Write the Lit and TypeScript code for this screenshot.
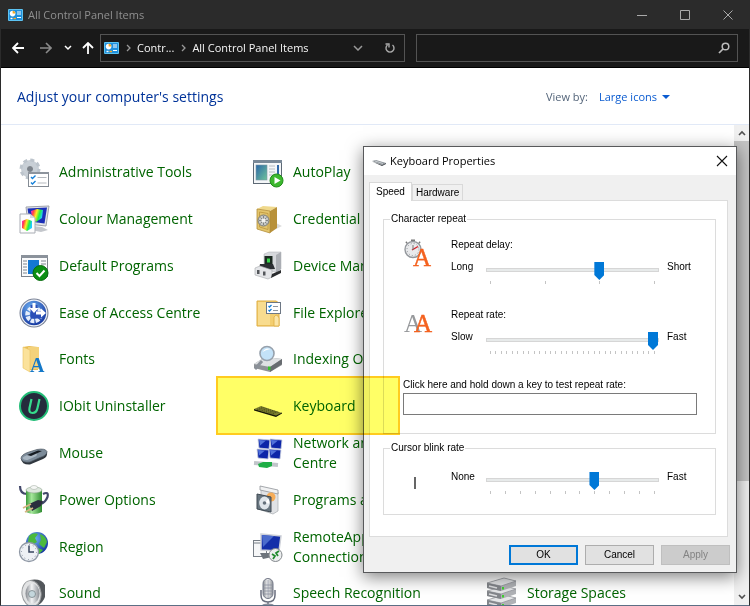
import { LitElement, html, svg, css, SVGTemplateResult } from "lit";
import { customElement } from "lit/decorators.js";

interface Item {
  name: string;
  icon: SVGTemplateResult;
}

const controlPanelIcon = html`<svg class="cp" viewBox="0 0 15 12" aria-hidden="true">
  <rect width="15" height="12" rx="1" fill="#5cc3f2" />
  <rect x="1" y="1" width="13" height="10" fill="#1f8fdc" />
  <circle cx="4.6" cy="4.6" r="2.8" fill="#fff" />
  <path d="M4.6 4.6V1.8A2.8 2.8 0 0 1 7.4 4.6z" fill="#f7a823" />
  <path d="M9 3h4M9 5h4M9 8.5h4" stroke="#fff" stroke-width="1.2" />
  <path d="M2.5 9.5h2" stroke="#fff" stroke-width="1.4" />
  <path d="M5.5 9.5h2.5" stroke="#f7a823" stroke-width="1.4" />
</svg>`;

const monitor = (x: number, y: number) => svg`
  <path d="M${x} ${y}l12 1-1 9-10-1z" fill="#0c25a8" stroke="#c9cfe0" stroke-width=".8"/>
  <path d="M${x + 1} ${y + 1}l7 .5-6 5z" fill="#6d92ee" opacity=".7"/>`;

const administrative = svg`
  <circle cx="12" cy="13" r="6" fill="none" stroke="#c8cfd6" stroke-width="6"/>
  <circle cx="12" cy="13" r="9" fill="none" stroke="#bcc4cc" stroke-width="3" stroke-dasharray="4 3.070"/>
  <circle cx="12" cy="13" r="3" fill="#7c838b"/>
  <rect x="10.500" y="16.500" width="20" height="14" fill="#fff" stroke="#848b94"/>
  <rect x="10" y="16" width="21" height="2" fill="#8d949d"/>
  <path d="M13 21l1.500 1.500 3-3M13 26.500l1.500 1.500 3-3" fill="none" stroke="#1580d8" stroke-width="1.400"/>
  <path d="M19.500 21.500h9M19.500 27h9" stroke="#b5b9be"/>`;

const colour = svg`
  <path d="M8 4l23-1-3 20-18-2z" fill="#e2e4e8" stroke="#9fa3ac"/>
  <path d="M9.500 5.500l19.500-1-2.500 16-15-2z" fill="#1a2fb8"/>
  <path d="M14 23l10 1 6 3-7 2-10-2z" fill="#c4c7cc"/>
  <path d="M13 8l6-2 6 1-1 8-6 4-4-4z" fill="url(#rainbow)"/>
  <path d="M2 11h10l5 4v15H2z" fill="#fdfdfd" stroke="#a9adb4"/>
  <path d="M12 11l5 4h-5z" fill="#d5d8dd"/>
  <path d="M4 18l5-2 5 2v7l-5 3-5-3z" fill="url(#rainbow)"/>`;

const defaults = svg`
  <rect x="3.500" y="5.500" width="26" height="21" fill="#fafbfc" stroke="#7b828b"/>
  <rect x="3" y="5" width="27" height="3" fill="#8b929b"/>
  <rect x="10" y="10" width="11" height="14" fill="#1478d4"/>
  <path d="M5 11h4M5 14h4M5 17h4M5 20h4M5 23h4M23 11h5M23 14h5" stroke="#7d858e"/>
  <circle cx="22.500" cy="23" r="7.500" fill="#0c8f14" stroke="#066b0c"/>
  <path d="M18.500 23l3 3 5-5.500" fill="none" stroke="#fff" stroke-width="2"/>`;

const ease = svg`
  <circle cx="16" cy="16" r="14.500" fill="#7b8498"/>
  <circle cx="16" cy="16" r="12.800" fill="url(#blueball)" stroke="#eef1f7" stroke-width="1.200"/>
  <circle cx="16" cy="17.500" r="6.500" fill="none" stroke="#e6edfb" stroke-width="4.500" stroke-dasharray="3.600 1.200"/>
  <path d="M16 8v10h9" fill="none" stroke="#2a4fb8" stroke-width="7"/>
  <path d="M14.500 6h3v5h3l-4.500 5-4.500-5h3zM18 14.500h5v-3l5 4.500-5 4.500v-3h-5z" fill="#fff"/>`;

const fonts = svg`
  <path d="M5 4l6-1 9 1v23H8z" fill="#e9bd51"/>
  <path d="M10 4h11v22H10z" fill="#f4d27b"/>
  <path d="M5 4l7 3v22l-7-4z" fill="#fbe29b" stroke="#e9c463" stroke-width=".6"/>
  <text x="12" y="29" font-family="Liberation Serif, serif" font-weight="700" font-size="20" fill="#1478c8">A</text>`;

const iobit = svg`
  <circle cx="16" cy="16" r="14" fill="#252b3c" stroke="#22bd77" stroke-width="2"/>
  <path d="M13.500 9l-2 9q-1 5 3 5t5-5l2-9" fill="none" stroke="#35dc8c" stroke-width="2.200"/>`;

const mouse = svg`
  <path d="M3 22q1 6 9 5.500l13-5.500q5-2 4-7z" fill="#2f363e"/>
  <path d="M3 21.500q0-4 8-6.500l8-2.500q8-1.500 10 2 0 4-7 6l-10 4.500q-8 1-9-3.500z" fill="#7c8b99" stroke="#4d5862" stroke-width=".7"/>
  <path d="M4.500 21q2-2.500 7-3.500l6-2q3 2 0 4l-8 3.500q-4 .500-5-2z" fill="#a8b5c1"/>
  <path d="M9 18l11-4.500 4 .500-11 5z" fill="#161b21"/>`;

const power = svg`
  <path d="M2 2q0 8 7 8M25 10q6-3 4.500 3-2 5-6.500 7" fill="none" stroke="#42486a" stroke-width="2.200"/>
  <path d="M8 6h16v22q-8 4-16 0z" fill="url(#battery)"/>
  <ellipse cx="16" cy="6" rx="8" ry="3" fill="#dfe8df" stroke="#8da48d" stroke-width=".6"/>
  <ellipse cx="16" cy="3.500" rx="3.500" ry="2" fill="#f5f7f5" stroke="#a9b3a9" stroke-width=".6"/>
  <path d="M11 20l9-4 5 1-2 5-9 5z" fill="#2a2d3d"/>
  <path d="M5 24l8-4M7 28l8-4" stroke="#d6b483" stroke-width="1.800"/>`;

const region = svg`
  <circle cx="19" cy="12" r="11" fill="url(#blueball)"/>
  <path d="M11 5q4-4 9-2l-3 4 2 4-5 3-4-3zM22 3q6 2 7 8l-3 6-5-4 2-4zM20 17l5 2-4 4z" fill="#4bb93d"/>
  <circle cx="11" cy="21" r="9.500" fill="#eef1f5" stroke="#8f98a5" stroke-width="1.300"/>
  <circle cx="11" cy="21" r="7.500" fill="none" stroke="#8891a0" stroke-dasharray="1 2.900"/>
  <path d="M11 14.500V21h5" fill="none" stroke="#38465f" stroke-width="1.500"/>`;

const sound = svg`
  <path d="M12 3q11-2 15 5v12q-3 8-12 10z" fill="#53575b"/>
  <ellipse cx="13.500" cy="16.500" rx="9.500" ry="13" transform="rotate(-8 13.500 16.500)" fill="#e2e3e4" stroke="#9a9d9f"/>
  <ellipse cx="14.500" cy="16.500" rx="7" ry="10" fill="url(#metal)"/>
  <circle cx="14" cy="17" r="3.500" fill="#c4d6dc" stroke="#788488" stroke-width=".8"/>`;

const autoplay = svg`
  <rect x="1.500" y="4.500" width="28" height="23" fill="#f4f6f8" stroke="#5d6975"/>
  <rect x="1" y="4" width="29" height="3" fill="#7a8998"/>
  <rect x="4" y="9" width="11" height="15" fill="url(#screen)" stroke="#7c98a6" stroke-width=".6"/>
  <path d="M17 10h6M17 13h6M17 16h6M17 19h4" stroke="#b6bcc3"/>
  <path d="M26 9v9" stroke="#2f67a8" stroke-width="2"/>
  <circle cx="24.500" cy="24.500" r="6.500" fill="#3db82f" stroke="#1f8c18"/>
  <path d="M22.500 21l6 3.500-6 3.500z" fill="#fff"/>`;

const credential = svg`
  <path d="M20 28l10-5-6-3z" fill="#dcdcdc"/>
  <path d="M5 6l6-3 14 1-7 4z" fill="#f0d98c"/>
  <path d="M18 8l7-4v21l-7 5z" fill="#b8913a"/>
  <path d="M5 6l13 2v22L5 26z" fill="#e3c56c" stroke="#b38d38" stroke-width=".8"/>
  <path d="M7.500 9l8.500 1.500v16L7.500 24z" fill="none" stroke="#c39d45"/>
  <circle cx="11.500" cy="17.500" r="5.500" fill="#c6c8c6" stroke="#777976" stroke-width="1"/>
  <path d="M11.500 13v9M7 17.500h9M8.500 14.500l6 6M14.500 14.500l-6 6" stroke="#7b7d7a" stroke-width=".9"/>
  <circle cx="11.500" cy="17.500" r="2" fill="#f2f2ef"/>`;

const device = svg`
  <path d="M12 4l5-2h12v17l-5 3-12-2z" fill="#d6d8dc" stroke="#a9acb1" stroke-width=".5"/>
  <path d="M24 5l5-3v17l-5 4z" fill="#abaeb4"/>
  <rect x="12.500" y="6" width="8" height="9" fill="#1d2a22"/>
  <rect x="15" y="8.500" width="3" height="4" fill="#38d64c"/>
  <path d="M8 14h13l2 5-16 1z" fill="#2c2f33"/>
  <path d="M3 18l5-2 12 4v7l-4 2-13-4z" fill="#e4e5e8" stroke="#a4a7ab" stroke-width=".6"/>
  <path d="M20 24l9-4v3l-10 5z" fill="#2a2c2e"/>
  <rect x="5" y="20" width="2.500" height="4" fill="#54575b"/><rect x="11" y="21.500" width="2.500" height="4" fill="#54575b"/>`;

const explorer = svg`
  <path d="M5 4h19l3 2v23H5z" fill="#f3ce70" stroke="#dfae42"/>
  <path d="M6 5h12v23H6z" fill="#f8dc8f"/>
  <path d="M22 20q3-4 5 1v8h-5z" fill="#fbe5a6" stroke="#dfae42" stroke-width=".8"/>
  <rect x="14.500" y="5.500" width="14" height="11" fill="#fff" stroke="#6d7784"/>
  <path d="M16.500 9l1 1 2-2M16.500 13l1 1 2-2" fill="none" stroke="#1580d8" stroke-width="1.300"/>
  <path d="M21 9.500h5M21 13.500h5" stroke="#8f969e"/>`;

const indexing = svg`
  <path d="M2 21l11-7 17 2v6L18 29 2 25z" fill="#8e9296"/>
  <path d="M2 21l11-7 17 2-12 8z" fill="#dfe1e3"/>
  <path d="M18 24l12-8v5l-12 8z" fill="#686c70"/>
  <rect x="16" y="23.500" width="2.500" height="3.500" fill="#35c22c"/>
  <path d="M10 18l-7 8" stroke="#8a9098" stroke-width="3"/>
  <circle cx="15" cy="10.500" r="7" fill="#c3e2f8" stroke="#97a1ac" stroke-width="1.600"/>
  <path d="M10.500 9q3-5 8-3-5 1-8 3z" fill="#fff"/>`;

const keyboard = svg`
  <path d="M2 19l7-3 21 7-6 3z" fill="#7f8272"/>
  <path d="M2 19l22 6.500 6-3v1l-6 3.500L2 20.500z" fill="#15160f"/>
  <path d="M5 19l18 5M7 18l18 5M9 17l18 5.500" stroke="#44463b" stroke-width=".8" stroke-dasharray="1.500 .8"/>`;

const network = svg`
  ${monitor(6, 2)}${monitor(18, 2)}${monitor(5, 12)}${monitor(17, 12)}
  <path d="M2 26l24 2" stroke="#c1c5ca" stroke-width="4"/>
  <path d="M6 27l5-2 9 0 0-2 0 6-5 2-8-1z" fill="#1fae46"/>`;

const programs = svg`
  <path d="M9 4l17 4v19l-5 3-12-4z" fill="#e0e2e5" stroke="#a8acb0" stroke-width=".7"/>
  <path d="M8 2l18 4v4L8 6z" fill="#f1f2f3" stroke="#8f9398" stroke-width=".8"/>
  <circle cx="19" cy="13" r="4.500" fill="#f6ad59"/>
  <path d="M5 10l14 3v15L5 25z" fill="#687680" stroke="#3f4952"/>
  <ellipse cx="12.500" cy="19" rx="5.300" ry="6.500" fill="#dfe5ea"/>
  <path d="M12.500 19l4-4.500 1 5z" fill="#fff"/>
  <circle cx="12.500" cy="19" r="1.800" fill="#65717c"/>`;

const remote = svg`
  <rect x="1.500" y="9.500" width="13" height="16" fill="#f6f7f8" stroke="#777e86"/>
  <path d="M2 12h12" stroke="#777e86"/>
  <path d="M9 3l20 2-2 15-18-1z" fill="#142fa9" stroke="#cfd2d9" stroke-width="1.500"/>
  <path d="M10 4l12 1-11 11z" fill="#6384dc" opacity=".7"/>
  <path d="M8 22l10 0 2 4-9 2z" fill="#6d747c"/>
  <circle cx="23.500" cy="24" r="6.500" fill="#eceeef" stroke="#83888c"/>
  <path d="M20 23l3 2-2 3M27 20l-3 2 2 3" fill="none" stroke="#208a2d" stroke-width="1.700"/>`;

const speech = svg`
  <path d="M9 13v5q0 7 7 7t7-7v-5M16 25v3" fill="none" stroke="#696e7d" stroke-width="1.500"/>
  <ellipse cx="16" cy="28.500" rx="6" ry="2" fill="#8b8f9b"/>
  <rect x="11" y="1.500" width="10" height="20" rx="5" fill="url(#metal)" stroke="#737887"/>
  <path d="M16 3v18M11 8h10M11 11h10M11 14h10M11 17h10" stroke="#8b90a0" stroke-width=".8"/>`;

const drive = (y: number) => svg`
  <path d="M1 ${y + 3}l17-5 12 3v5l-15 5-14-3z" fill="#b0b2b6"/>
  <path d="M1 ${y + 3}l17-5 12 3-15 5z" fill="#e6e7e9" stroke="#8e9196" stroke-width=".7"/>
  <path d="M1 ${y + 3}l14 3v5l-14-3z" fill="#83868b"/>
  <path d="M3 ${y + 6}l8 2" stroke="#dcdddf" stroke-width="1.500"/>
  <rect x="16" y="${y + 7}" width="2" height="2.500" fill="#3fd02f"/>`;
const storage = svg`${drive(20)}${drive(11)}${drive(3)}`;

const columns: Item[][] = [
  [
    { name: "Administrative Tools", icon: administrative },
    { name: "Colour Management", icon: colour },
    { name: "Default Programs", icon: defaults },
    { name: "Ease of Access Centre", icon: ease },
    { name: "Fonts", icon: fonts },
    { name: "IObit Uninstaller", icon: iobit },
    { name: "Mouse", icon: mouse },
    { name: "Power Options", icon: power },
    { name: "Region", icon: region },
    { name: "Sound", icon: sound },
  ],
  [
    { name: "AutoPlay", icon: autoplay },
    { name: "Credential Manager", icon: credential },
    { name: "Device Manager", icon: device },
    { name: "File Explorer Options", icon: explorer },
    { name: "Indexing Options", icon: indexing },
    { name: "Keyboard", icon: keyboard },
    { name: "Network and Sharing Centre", icon: network },
    { name: "Programs and Features", icon: programs },
    { name: "RemoteApp and Desktop Connections", icon: remote },
    { name: "Speech Recognition", icon: speech },
  ],
  [{ name: "Storage Spaces", icon: storage }],
];

@customElement("keyboard-dialog")
export class KeyboardDialog extends LitElement {
  static styles = css`
    :host {
      display: block;
      box-sizing: border-box;
      border: 1px solid #58595b;
      background: #f0f0f0;
      color: #000;
      font: 10px/14px "Liberation Sans", Arial, sans-serif;
      box-shadow: 0 4px 16px rgba(0, 0, 0, 0.5);
    }
    * { box-sizing: border-box; }
    header {
      display: flex;
      align-items: center;
      height: 28px;
      padding: 0 8px;
      background: #fff;
    }
    svg { flex: none; overflow: visible; }
    h2 {
      flex: 1;
      margin: 0 0 0 4px;
      font: 11px/16px "Open Sans", "Noto Sans", sans-serif;
    }
    button { font: inherit; color: inherit; padding: 0; }
    .close { display: flex; border: 0; background: none; }
    .body { padding: 7px 8px 7px 5px; }
    .tabs { display: flex; align-items: flex-end; height: 18px; }
    .tab {
      height: 16px;
      padding: 0 3px;
      border: 1px solid #d9d9d9;
      border-bottom: 0;
      background: #f0f0f0;
    }
    .tab.active {
      position: relative;
      height: 19px;
      margin-bottom: -1px;
      padding: 0 6px;
      background: #fff;
    }
    .pane {
      border: 1px solid #dcdcdc;
      background: #fff;
      padding: 11px 11px 21px 13px;
    }
    fieldset {
      min-width: 0;
      margin: 0;
      padding: 0 18px 0 19px;
      border: 1px solid #dcdcdc;
    }
    fieldset + fieldset { margin-top: 7px; }
    legend { margin-left: -13px; padding: 0 1px; }
    .repeat { height: 222px; padding-top: 12px; }
    .blink { height: 74px; padding-top: 15px; }
    .setting {
      display: grid;
      grid-template-columns: 48px 35px minmax(0, 1fr) 38px;
      grid-template-rows: 14px auto;
      row-gap: 8px;
      height: 70px;
    }
    .setting svg { grid-row: span 2; }
    .setting .title { grid-column: 2 / -1; }
    .setting.short { grid-template-rows: auto; height: 30px; }
    .setting.short svg { grid-row: auto; }
    .end { padding-left: 8px; }
    .slider { padding-top: 2px; }
    input[type="range"] {
      display: block;
      appearance: none;
      -webkit-appearance: none;
      width: 100%;
      height: 16px;
      margin: 0;
      background: none;
    }
    input[type="range"]::-webkit-slider-runnable-track {
      height: 4px;
      border: 1px solid #d6d6d6;
      background: #e7eaea;
    }
    input[type="range"]::-webkit-slider-thumb {
      -webkit-appearance: none;
      width: 10px;
      height: 18px;
      margin-top: -7px;
      border: 0;
      border-radius: 0;
      background: #0078d7;
      clip-path: polygon(0 0, 100% 0, 100% 72%, 50% 100%, 0 72%);
    }
    .ticks {
      display: flex;
      justify-content: space-between;
      padding: 3px 4px 0;
    }
    .ticks i { width: 1px; height: 3px; background: #c4c4c4; }
    .test { display: block; }
    .test input {
      display: block;
      width: 100%;
      height: 22px;
      margin-top: 1px;
      border: 1px solid #7a7a7a;
      background: #fff;
    }
    footer {
      display: flex;
      justify-content: flex-end;
      gap: 7px;
      margin: 8px -2px 0 0;
    }
    footer button {
      width: 69px;
      height: 20px;
      border: 1px solid #adadad;
      background: #e1e1e1;
    }
    footer .ok { border: 2px solid #0078d7; }
    footer button:disabled {
      border-color: #bfbfbf;
      background: #cccccc;
      color: #838383;
    }
  `;

  private slider(id: string, from: string, to: string, max: number, value: number) {
    return html`
      <label for=${id}>${from}</label>
      <div class="slider">
        <input id=${id} type="range" min="0" max=${max} .value=${String(value)} />
        <div class="ticks">${Array.from({ length: max + 1 }, () => html`<i></i>`)}</div>
      </div>
      <span class="end">${to}</span>
    `;
  }

  render() {
    return html`
      <header>
        <svg width="14" height="14" viewBox="0 0 14 14" aria-hidden="true">
          <path d="M0 7l4-1 10 3-4 2z" fill="#8d949a" />
          <path d="M0 7.500l10 3.500 4-2v1l-4 2z" fill="#3d4247" />
          <path d="M3 7l8 2.500" stroke="#d9dde0" stroke-width=".8" />
        </svg>
        <h2>Keyboard Properties</h2>
        <button class="close" aria-label="Close">
          <svg width="12" height="12" viewBox="0 0 12 12"><path d="M1 1l10 10M11 1L1 11" stroke="#111" stroke-width="1.100" /></svg>
        </button>
      </header>
      <div class="body">
        <div class="tabs" role="tablist">
          <button class="tab active" role="tab" aria-selected="true">Speed</button>
          <button class="tab" role="tab" aria-selected="false">Hardware</button>
        </div>
        <div class="pane">
          <fieldset class="repeat">
            <legend>Character repeat</legend>
            <div class="setting">
              <svg width="30" height="30" viewBox="0 0 30 30" aria-hidden="true">
                <path d="M8 2.500h4M3 5l1-1M16 4l1 1" stroke="#777" stroke-width="1.800" />
                <circle cx="10" cy="11.500" r="8" fill="#e9eaec" stroke="#94989d" stroke-width="1.400" />
                <circle cx="10" cy="11.500" r="6" fill="none" stroke="#8d9196" stroke-dasharray="1 2.140" />
                <path d="M9 12l6-3.500" stroke="#d4202a" stroke-width="1.400" />
                <path d="M10 12V7" stroke="#777" />
                <text x="10" y="28" font-family="Liberation Serif, serif" font-size="25" fill="#f4621f" stroke="#f4621f" stroke-width=".4">A</text>
              </svg>
              <label class="title" for="delay">Repeat delay:</label>
              ${this.slider("delay", "Long", "Short", 3, 2)}
            </div>
            <div class="setting">
              <svg width="30" height="30" viewBox="0 0 30 30" aria-hidden="true">
                <g font-family="Liberation Serif, serif" font-size="25">
                  <text x="1" y="24" fill="#97999c">A</text>
                  <text x="11" y="24" fill="#f4621f" stroke="#f4621f" stroke-width=".5">A</text>
                </g>
              </svg>
              <label class="title" for="rate">Repeat rate:</label>
              ${this.slider("rate", "Slow", "Fast", 30, 30)}
            </div>
            <label class="test">
              Click here and hold down a key to test repeat rate:
              <input type="text" />
            </label>
          </fieldset>
          <fieldset class="blink">
            <legend>Cursor blink rate</legend>
            <div class="setting short">
              <svg width="30" height="22" viewBox="0 0 30 22" aria-hidden="true"><path d="M12 7v12" stroke="#333" stroke-width="1.500" /></svg>
              ${this.slider("blink", "None", "Fast", 11, 7)}
            </div>
          </fieldset>
        </div>
        <footer>
          <button class="ok">OK</button>
          <button>Cancel</button>
          <button disabled>Apply</button>
        </footer>
      </div>
    `;
  }
}

@customElement("app-root")
export class AppRoot extends LitElement {
  static styles = css`
    :host {
      display: flex;
      flex-direction: column;
      position: relative;
      box-sizing: border-box;
      height: 100vh;
      overflow: hidden;
      border: 1px solid #2b2b2b;
      border-bottom-color: #5c6f85;
      background: #fff;
      font: 11px/16px "Open Sans", "Noto Sans", sans-serif;
    }
    * { box-sizing: border-box; }
    button {
      display: flex;
      align-items: center;
      justify-content: center;
      padding: 0;
      border: 0;
      background: none;
      color: inherit;
      font: inherit;
    }
    svg { flex: none; fill: none; }
    .cp { width: 15px; height: 12px; }
    .titlebar {
      flex: none;
      display: flex;
      align-items: center;
      height: 28px;
      padding-left: 7px;
      background: #2b2b2b;
      color: #909090;
    }
    h1 { flex: 1; margin: 0 0 0 5px; font: inherit; }
    .titlebar button { width: 43px; height: 28px; }
    .nav {
      flex: none;
      display: flex;
      align-items: center;
      height: 39px;
      padding: 0 11px 0 7px;
      border-bottom: 1px solid #000;
      background: #191919;
      color: #fff;
    }
    .nav .step { width: 20px; height: 28px; }
    .nav .forward { margin-left: 8px; }
    .nav .recent { width: 16px; margin-left: 4px; }
    .nav .up { margin-left: 2px; }
    .address {
      display: flex;
      align-items: center;
      flex: 307;
      height: 28px;
      padding-left: 3px;
      margin-left: 2px;
      border: 1px solid #535353;
      color: #f5f5f5;
      font-weight: 500;
    }
    .address .sep { width: 18px; text-align: center; }
    .address .sep svg { display: block; margin: 0 auto; }
    .address .history { width: 36px; height: 26px; margin-left: auto; }
    .address .refresh { width: 28px; height: 26px; }
    .search {
      display: flex;
      align-items: center;
      flex: 320;
      height: 28px;
      margin-left: 11px;
      padding-right: 7px;
      border: 1px solid #535353;
    }
    .search input {
      flex: 1;
      min-width: 0;
      border: 0;
      outline: 0;
      background: none;
      color: #fff;
      font: inherit;
    }
    .heading {
      flex: none;
      display: flex;
      align-items: center;
      justify-content: space-between;
      height: 57px;
      padding: 2px 79px 0 16px;
      border-bottom: 1px solid #e1e9f7;
    }
    h2 { margin: 0; color: #003399; font: 14px/20px "Open Sans", "Noto Sans", sans-serif; }
    .view { display: flex; align-items: center; color: #54657a; }
    select {
      appearance: none;
      -webkit-appearance: none;
      margin: 0 4px 0 11px;
      padding: 0;
      border: 0;
      background: none;
      color: #0a5bd0;
      font: inherit;
    }
    .content { flex: 1; min-height: 0; display: flex; }
    .columns {
      flex: 1;
      display: grid;
      grid-template-columns: 234px 234px minmax(0, 1fr);
      grid-template-rows: repeat(2, 47px 47px 47px 47px 46px);
      grid-auto-flow: column;
      padding: 23px 0 0 17px;
    }
    .item {
      display: flex;
      align-items: center;
      padding-right: 12px;
      color: #006400;
      font: 14px/20px "Open Sans", "Noto Sans", sans-serif;
      text-decoration: none;
    }
    .item svg { width: 32px; height: 32px; margin-right: 9px; }
    .item.last { grid-area: 10 / 3; }
    .scroll {
      display: flex;
      flex-direction: column;
      width: 15px;
      background: #f0f0f0;
    }
    .scroll button { width: 15px; height: 16px; flex: none; }
    .thumb { height: 340px; background: #c4c4c4; }
    .scroll .down { margin-top: auto; }
    .defs { position: absolute; width: 0; height: 0; }
    keyboard-dialog { position: absolute; left: 362px; top: 145px; width: 374px; }
    .mark {
      position: absolute;
      left: 215px;
      top: 375px;
      width: 184px;
      height: 59px;
      border: 2px solid #ffcb1f;
      background: #ffff66;
      mix-blend-mode: multiply;
      pointer-events: none;
    }
  `;

  render() {
    return html`
      <svg class="defs" aria-hidden="true">
        <defs>
          <linearGradient id="rainbow" x1="0" y1="0" x2="1" y2=".3">
            <stop offset="0" stop-color="#f2e" /><stop offset=".25" stop-color="#f44" />
            <stop offset=".5" stop-color="#fe2" /><stop offset=".75" stop-color="#2e4" />
            <stop offset="1" stop-color="#2cf" />
          </linearGradient>
          <radialGradient id="blueball" cx=".4" cy=".3" r=".7">
            <stop offset="0" stop-color="#6fb2f2" /><stop offset="1" stop-color="#1537a0" />
          </radialGradient>
          <linearGradient id="battery">
            <stop offset="0" stop-color="#3a9a3a" /><stop offset=".35" stop-color="#a5e89b" />
            <stop offset="1" stop-color="#2f8c31" />
          </linearGradient>
          <linearGradient id="metal">
            <stop offset="0" stop-color="#85898f" /><stop offset=".45" stop-color="#f3f4f5" />
            <stop offset="1" stop-color="#8b8f95" />
          </linearGradient>
          <linearGradient id="screen" x2="1" y2="1">
            <stop offset="0" stop-color="#2c67a8" /><stop offset="1" stop-color="#6ec49b" />
          </linearGradient>
        </defs>
      </svg>
      <header class="titlebar">
        ${controlPanelIcon}
        <h1>All Control Panel Items</h1>
        <button aria-label="Minimize"><svg width="10" height="10"><path d="M0 5.500h10" stroke="#aaa" /></svg></button>
        <button aria-label="Maximize"><svg width="10" height="10"><path d="M.5 .5h9v9h-9z" stroke="#aaa" /></svg></button>
        <button aria-label="Close"><svg width="10" height="10"><path d="M.5 .5l9 9M9.500 .5l-9 9" stroke="#aaa" /></svg></button>
      </header>
      <nav class="nav">
        <button class="step" aria-label="Back"><svg width="12" height="12"><path d="M12 6H1.500M6 1L1 6l5 5" stroke="#fff" stroke-width="1.800" /></svg></button>
        <button class="step forward" aria-label="Forward"><svg width="12" height="12"><path d="M0 6h10.500M6 1l5 5-5 5" stroke="#8a8a8a" stroke-width="1.600" /></svg></button>
        <button class="step recent" aria-label="Recent locations"><svg width="8" height="6"><path d="M1 1l3 3 3-3" stroke="#fff" stroke-width="1.500" /></svg></button>
        <button class="step up" aria-label="Up"><svg width="12" height="12"><path d="M6 12V1.500M1 6l5-5 5 5" stroke="#fff" stroke-width="1.800" /></svg></button>
        <div class="address">
          ${controlPanelIcon}
          <span class="sep"><svg width="5" height="8"><path d="M1 1l3 3-3 3" stroke="#999" stroke-width="1.300" /></svg></span>
          <button>Contr...</button>
          <span class="sep"><svg width="5" height="8"><path d="M1 1l3 3-3 3" stroke="#999" stroke-width="1.300" /></svg></span>
          <button>All Control Panel Items</button>
          <button class="history" aria-label="Previous locations"><svg width="10" height="6"><path d="M1 1l4 4 4-4" stroke="#999" stroke-width="1.500" /></svg></button>
          <button class="refresh" aria-label="Refresh"><svg width="12" height="12"><path d="M3.500 3A4 4 0 1 0 8.500 3M1.500 2h3.500v3.500" stroke="#aaa" stroke-width="1.400" /></svg></button>
        </div>
        <div class="search">
          <input type="text" aria-label="Search Control Panel" />
          <svg width="12" height="12" aria-hidden="true"><circle cx="7.500" cy="4.500" r="3.300" stroke="#bbb" stroke-width="1.500" /><path d="M5 7L1 11" stroke="#bbb" stroke-width="1.700" /></svg>
        </div>
      </nav>
      <section class="heading">
        <h2>Adjust your computer's settings</h2>
        <div class="view">
          <label for="view">View by:</label>
          <select id="view"><option>Large icons</option></select>
          <svg width="8" height="4" aria-hidden="true"><path d="M0 0h8L4 4z" fill="#0a5bd0" /></svg>
        </div>
      </section>
      <main class="content">
        <div class="columns">
          ${columns.map((column, c) =>
            column.map(
              (item) => html`<a class=${c === 2 ? "item last" : "item"} href="#">
                <svg viewBox="0 0 32 32" aria-hidden="true">${item.icon}</svg>
                <span>${item.name}</span>
              </a>`
            )
          )}
        </div>
        <div class="scroll">
          <button aria-label="Scroll up"><svg width="8" height="6"><path d="M1 5l3-3 3 3" stroke="#505050" stroke-width="1.600" /></svg></button>
          <div class="thumb"></div>
          <button class="down" aria-label="Scroll down"><svg width="8" height="6"><path d="M1 1l3 3 3-3" stroke="#505050" stroke-width="1.600" /></svg></button>
        </div>
      </main>
      <keyboard-dialog role="dialog" aria-label="Keyboard Properties"></keyboard-dialog>
      <div class="mark"></div>
    `;
  }
}
